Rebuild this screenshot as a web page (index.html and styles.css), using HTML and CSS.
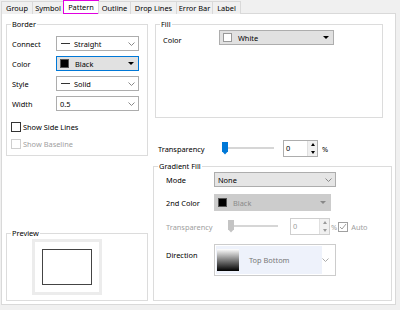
FILE: index.html
```html
<!DOCTYPE html>
<html lang="en">
<head>
    <meta charset="UTF-8">
    <title>Pattern</title>
    <link rel="stylesheet" href="styles.css">
</head>
<body>
    <ul class="tabs">
        <li class="t1">Group</li>
        <li class="t2">Symbol</li>
        <li class="t3 on">Pattern</li>
        <li class="t4">Outline</li>
        <li class="t5">Drop Lines</li>
        <li class="t6">Error Bar</li>
        <li class="t7">Label</li>
    </ul>
    <div class="panel">
        <div class="col-left">
            <div class="grp border-grp">
                <span class="grp-title">Border</span>
                <div class="row">
                    <span class="lbl">Connect</span>
                    <div class="sel w83"><span class="dash"></span>Straight<svg class="chev" width="7" height="4" viewBox="0 0 7 4"><polyline points="0.5,0.5 3.5,3.5 6.5,0.5" fill="none" stroke="#888" stroke-width="1"/></svg></div>
                </div>
                <div class="row">
                    <span class="lbl">Color</span>
                    <div class="combo focus w83"><span class="swatch black"></span>Black<span class="tri"></span></div>
                </div>
                <div class="row">
                    <span class="lbl">Style</span>
                    <div class="sel w83"><span class="dash"></span>Solid<svg class="chev" width="7" height="4" viewBox="0 0 7 4"><polyline points="0.5,0.5 3.5,3.5 6.5,0.5" fill="none" stroke="#888" stroke-width="1"/></svg></div>
                </div>
                <div class="row">
                    <span class="lbl">Width</span>
                    <div class="sel w83">0.5<svg class="chev" width="7" height="4" viewBox="0 0 7 4"><polyline points="0.5,0.5 3.5,3.5 6.5,0.5" fill="none" stroke="#888" stroke-width="1"/></svg></div>
                </div>
                <label class="chk first"><span class="box"></span>Show Side Lines</label>
                <label class="chk off"><span class="box"></span>Show Baseline</label>
            </div>
            <div class="grp preview-grp">
                <span class="grp-title">Preview</span>
                <div class="preview"><div class="preview-rect"></div></div>
            </div>
        </div>
        <div class="col-right">
            <div class="grp fill-grp">
                <span class="grp-title">Fill</span>
                <div class="row">
                    <span class="lbl w56">Color</span>
                    <div class="combo w115"><span class="swatch white"></span>White<span class="tri"></span></div>
                </div>
            </div>
            <div class="trans-row">
                <span class="lbl w64">Transparency</span>
                <div class="slider"><span class="thumb"></span></div>
                <div class="spin"><span class="val">0</span><span class="arrows"><span class="up"></span><span class="down"></span></span></div>
                <span class="pct">%</span>
            </div>
            <div class="grp grad-grp">
                <span class="grp-title">Gradient Fill</span>
                <span class="glbl">Mode</span>
                <div class="combo plain w122">None<svg class="chev" width="7" height="4" viewBox="0 0 7 4"><polyline points="0.5,0.5 3.5,3.5 6.5,0.5" fill="none" stroke="#888" stroke-width="1"/></svg></div>
                <span class="glbl">2nd Color</span>
                <div class="combo dis w117 tall"><span class="swatch black"></span>Black<span class="tri"></span></div>
                <div class="gtrans off">
                    <span class="lbl w62">Transparency</span>
                    <div class="slider small"><span class="thumb"></span></div>
                    <div class="spin wide"><span class="val">0</span><span class="arrows"><span class="up"></span><span class="down"></span></span></div>
                    <span class="pct tight">%</span>
                    <label class="chk inline"><span class="box"><svg width="8" height="8" viewBox="0 0 8 8"><polyline points="1,4 3,6 7,1" fill="none" stroke="#a0a0a0" stroke-width="1"/></svg></span>Auto</label>
                </div>
                <span class="glbl top">Direction</span>
                <div class="dir">
                    <div class="dir-inner"><span class="grad"></span>Top Bottom</div>
                    <svg class="chev" width="7" height="4" viewBox="0 0 7 4"><polyline points="0.5,0.5 3.5,3.5 6.5,0.5" fill="none" stroke="#aaa" stroke-width="1"/></svg>
                </div>
            </div>
        </div>
    </div>
</body>
</html>
```

FILE: styles.css
```css
*{margin: 0;padding: 0;box-sizing: border-box;}
ul,li{list-style: none;}
html,body{width: 400px;height: 310px;overflow: hidden;}
body{background: #f0f0f0;font-family: "Noto Sans", "Open Sans", sans-serif;font-size: 7.4px;color: #000;}

/* tabs */
.tabs{display: flex;height: 14px;padding: 1px 0 0 1px;position: relative;z-index: 1;}
.tabs li{height: 13px;line-height: 12px;text-align: center;border: 1px solid #d9d9d9;border-bottom: none;margin-right: -1px;background: #f0f0f0;white-space: nowrap;}
.tabs li.on{height: 14px;margin-top: -1px;border: 1px solid #e000e0;background: #fff;line-height: 13px;}
.tabs .t1{width: 32px;}
.tabs .t2{width: 32px;}
.tabs .t3{width: 36px;}
.tabs .t4{width: 33px;}
.tabs .t5{width: 47px;}
.tabs .t6{width: 37px;}
.tabs .t7{width: 29px;}

/* panel */
.panel{display: grid;grid-template-columns: 142px 1fr;column-gap: 7px;width: 395px;height: 292px;margin: -1px 0 0 1px;background: #fff;border: 1px solid #d9d9d9;padding: 5px 3px 3px 4px;}
.col-left{display: flex;flex-direction: column;justify-content: space-between;}
.col-right{display: flex;flex-direction: column;}

/* group box, title sits on the top border */
.grp{position: relative;border: 1px solid #dcdcdc;margin-top: 5px;padding: 4px 5px 0 5px;}
.grp-title{position: absolute;top: -6px;left: 4px;padding: 0 1px;line-height: 10px;background: #fff;}

.row{display: flex;align-items: center;height: 15px;margin-top: 5px;}
.border-grp .row:first-of-type{margin-top: 7px;}
.lbl{width: 44px;flex-shrink: 0;}
.lbl.w56{width: 56px;}
.lbl.w64{width: 64px;}
.lbl.w62{width: 62px;}

.sel,.combo{display: flex;align-items: center;height: 15px;border: 1px solid #adadad;background: #fff;padding: 0 3px;white-space: nowrap;}
.w83{width: 83px;}
.w115{width: 115px;}
.w122{width: 122px;}
.w117{width: 117px;}
.sel .chev,.combo .chev,.dir .chev{margin-left: auto;}
.dash{width: 9px;height: 1px;background: #333;margin: 0 4px 0 1px;}
.combo{background: #e1e1e1;}
.combo.focus{border-color: #0078d7;}
.combo.plain{background: #e5e5e5;border-color: #adadad;}
.combo.dis{background: #cccccc;border-color: #cccccc;color: #8a8a8a;}
.combo.tall{height: 17px;}
.swatch{width: 9px;height: 9px;border: 1px solid #555;margin-right: 6px;}
.swatch.black{background: #000;}
.swatch.white{background: #fff;border-color: #999;}
.tri{margin-left: auto;width: 0;height: 0;border-left: 3px solid transparent;border-right: 3px solid transparent;border-top: 3px solid #000;margin-right: 1px;}
.combo.dis .tri{border-top-color: #888;}

.chk{display: flex;align-items: center;height: 11px;margin-left: -1px;}
.chk .box{width: 10px;height: 10px;border: 1px solid #333;background: #fff;margin-right: 2px;display: flex;align-items: center;justify-content: center;}
.chk.first{margin-top: 10px;}
.chk.off{margin-top: 6px;color: #a0a0a0;}
.chk.off .box{border-color: #cfcfcf;}

/* border group */
.border-grp{height: 132px;}

/* preview */
.preview-grp{height: 68px;padding-top: 5px;}
.preview{width: 70px;height: 56px;border: 3px solid #ececec;padding: 7px;margin-left: 20px;}
.preview-rect{width: 100%;height: 100%;border: 1px solid #444;}

/* fill */
.fill-grp{width: 228px;height: 94px;padding-left: 7px;}
.fill-grp .row{margin-top: 1px;align-items: flex-start;}
.fill-grp .lbl{padding-top: 5px;}

/* transparency */
.trans-row{display: flex;align-items: center;height: 17px;margin-top: 22px;margin-left: 3px;}
.slider{width: 52px;height: 14px;position: relative;margin-right: 9px;}
.slider::before{content: "";position: absolute;left: 0;right: 0;top: 5px;height: 2px;background: #d6d6d6;}
.slider .thumb{position: absolute;left: 0;top: 0;width: 6px;height: 13px;background: #0078d7;clip-path: polygon(0 0,100% 0,100% 75%,50% 100%,0 75%);}
.spin{display: flex;height: 17px;border: 1px solid #adadad;width: 35px;background: #fff;}
.spin .val{flex: 1;padding-left: 2px;line-height: 14px;}
.spin .arrows{width: 10px;border-left: 1px solid #e0e0e0;display: flex;flex-direction: column;background: #f0f0f0;}
.spin .arrows span{flex: 1;display: flex;align-items: center;justify-content: center;}
.spin .up::before{content: "";border-left: 2.5px solid transparent;border-right: 2.5px solid transparent;border-bottom: 3px solid #000;}
.spin .down::before{content: "";border-left: 2.5px solid transparent;border-right: 2.5px solid transparent;border-top: 3px solid #000;}
.pct{margin-left: 4px;}

/* gradient */
.grad-grp{flex: 1;margin-top: 9px;margin-left: -2px;padding: 5px 5px 0 12px;display: grid;grid-template-columns: 48px max-content;grid-template-rows: 15px 17px 17px 32px;row-gap: 7px;align-items: center;align-content: start;justify-content: start;}
.glbl{grid-column: 1;}
.glbl.top{align-self: start;padding-top: 4px;}
.gtrans{grid-column: 1 / span 2;display: flex;align-items: center;height: 17px;color: #a0a0a0;}
.slider.small{width: 50px;margin-right: 12px;}
.slider.small .thumb{background: #c4c4c4;}
.spin.wide{width: 40px;border-color: #cfcfcf;}
.spin.wide .arrows span::before{border-bottom-color: #999;border-top-color: #999;}
.pct.tight{margin-left: 1px;}
.chk.inline{margin-left: 1px;}
.chk.inline .box{border-color: #a0a0a0;margin-right: 3px;}
.dir{display: flex;align-items: center;width: 122px;height: 32px;margin-top: 4px;border: 1px solid #cccccc;padding: 1px 6px 1px 1px;}
.glbl.top{margin-top: 4px;}
.dir-inner{display: flex;align-items: center;width: 106px;height: 100%;background: #eef2fb;color: #777;padding-left: 1px;}
.grad{width: 22px;height: 22px;background: linear-gradient(#fff,#000);margin-right: 10px;}
```
